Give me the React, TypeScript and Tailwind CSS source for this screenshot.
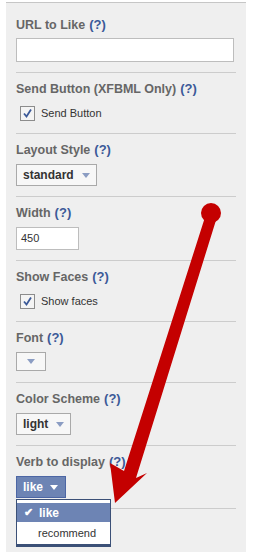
const font = { fontFamily: '"Liberation Sans", Arial, sans-serif' };

function Help() {
  return <span className="ml-[4px] text-[13px] text-[#3b5998]">(?)</span>;
}

function Label({ children }: { children: React.ReactNode }) {
  return (
    <div className="h-[14px] whitespace-nowrap text-[12.5px] font-bold leading-[14px] text-[#666666]">
      {children}
      <Help />
    </div>
  );
}

function Caret({ color = "#8b9dc3" }: { color?: string }) {
  return (
    <svg width="8" height="5" viewBox="0 0 8 5" className="shrink-0">
      <path d="M0 0h8L4 5z" fill={color} />
    </svg>
  );
}

function Select({ text, w }: { text?: string; w: string }) {
  return (
    <div
      className={`flex h-[22px] ${w} items-center gap-[8px] border border-[#a9a9a9] bg-[#f7f7f7] px-[6px] text-[12px] font-bold text-[#333333]`}
    >
      {text && <span>{text}</span>}
      <Caret />
    </div>
  );
}

function Check({ text }: { text: string }) {
  return (
    <div className="flex h-[20px] items-center gap-[6px] pl-[4px]">
      <div className="flex h-[15px] w-[15px] items-center justify-center border border-[#8c8c8c] bg-[#f4f4f4]">
        <svg width="11" height="11" viewBox="0 0 11 11">
          <path d="M2 5.5l2.5 3L9 1.5" fill="none" stroke="#3b5998" strokeWidth="1.8" />
        </svg>
      </div>
      <span className="text-[11px] text-[#333333]">{text}</span>
    </div>
  );
}

function Section({ children, last }: { children: React.ReactNode; last?: boolean }) {
  return (
    <div className={`relative pt-[9px] pb-[10px] ${last ? "" : "border-b border-[#cccccc]"}`}>
      {children}
    </div>
  );
}

export default function App() {
  return (
    <div className="relative h-[559px] w-[254px] overflow-hidden bg-white" style={font}>
      <div className="ml-[6px] mt-[2px] h-[550px] w-[240px] border-t border-[#c6c6c6] bg-[#efefef] px-[10px]">
        <div className="border-b border-[#cccccc] pt-[15px] pb-[10px]">
          <Label>URL to Like</Label>
          <div className="mt-[6px] h-[24px] w-[218px] border border-[#bdbdbd] bg-white" />
        </div>
        <Section>
          <Label>Send Button (XFBML Only)</Label>
          <div className="mt-[7px]">
            <Check text="Send Button" />
          </div>
        </Section>
        <Section>
          <Label>Layout Style</Label>
          <div className="mt-[7px]">
            <Select text="standard" w="w-[81px]" />
          </div>
        </Section>
        <Section>
          <Label>Width</Label>
          <div className="mt-[7px] flex h-[23px] w-[63px] items-center border border-[#bdbdbd] bg-white px-[4px] text-[11px] text-[#333333]">
            450
          </div>
        </Section>
        <Section>
          <Label>Show Faces</Label>
          <div className="mt-[7px]">
            <Check text="Show faces" />
          </div>
        </Section>
        <Section>
          <Label>Font</Label>
          <div className="mt-[7px] flex h-[19px] w-[30px] items-center justify-center border border-[#a9a9a9] bg-[#f7f7f7] pb-[1px]">
            <Caret />
          </div>
          <div className="h-[1px]" />
        </Section>
        <Section>
          <Label>Color Scheme</Label>
          <div className="mt-[7px]">
            <Select text="light" w="w-[55px]" />
          </div>
        </Section>
        <Section>
          <Label>Verb to display</Label>
          <div className="mt-[7px] flex h-[22px] w-[50px] items-center gap-[7px] border border-[#4c66a4] bg-[#6d84b4] px-[6px] text-[12px] font-bold text-white">
            <span>like</span>
            <Caret color="#ffffff" />
          </div>
          <div className="absolute left-0 top-[53px] z-10 w-[95px] border border-b-[3px] border-[#3b5077] bg-white pt-[3px]">
            <div className="flex h-[19px] items-center gap-[6px] bg-[#6d84b4] pl-[7px] text-[12px] font-bold text-white">
              <span className="text-[11px]">✔</span>
              <span>like</span>
            </div>
            <div className="flex h-[22px] items-center pl-[21px] text-[11px] text-[#333333]">recommend</div>
          </div>
        </Section>
      </div>
      <svg className="pointer-events-none absolute left-0 top-0 z-20" width="254" height="559" viewBox="0 0 254 559">
        <path
          d="M206 214 L124 471 L110 463 L115 503 L147 473 L136 478 L217 217 Z"
          fill="#c40000"
        />
        <circle cx="211" cy="213" r="10" fill="#c40000" />
      </svg>
    </div>
  );
}
